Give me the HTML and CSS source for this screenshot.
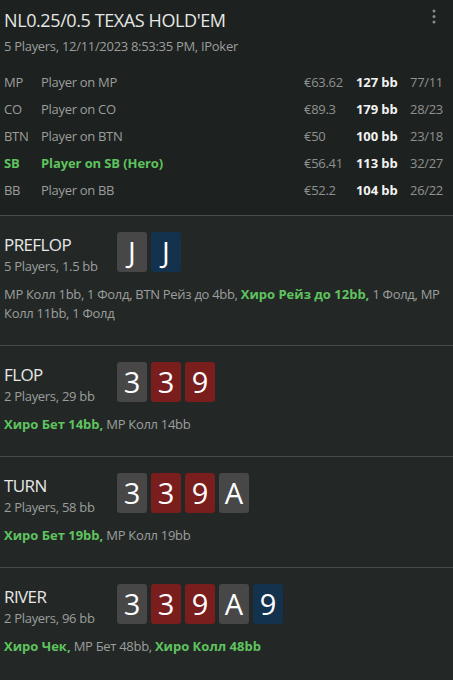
FILE: index.html
```html
<!DOCTYPE html>
<html lang="ru">
<head>
    <meta charset="UTF-8">
    <title>NL0.25/0.5 Texas Hold'em</title>
    <link rel="stylesheet" href="styles.css">
</head>
<body>

    <div class="hand-header">
        <div class="title-row">
            <h1 class="hand-title">NL0.25/0.5 TEXAS HOLD'EM</h1>
            <svg class="menu-dots" width="6" height="18" viewBox="0 0 6 18">
                <circle cx="3" cy="3" r="1.5" fill="#8a8c8b"/>
                <circle cx="3" cy="8.5" r="1.5" fill="#8a8c8b"/>
                <circle cx="3" cy="14" r="1.5" fill="#8a8c8b"/>
            </svg>
        </div>
        <div class="hand-info">5 Players, 12/11/2023 8:53:35 PM, IPoker</div>

        <div class="players">
            <div class="player">
                <span class="pos">MP</span>
                <span class="name">Player on MP</span>
                <span class="stack">€63.62</span>
                <span class="bb">127 bb</span>
                <span class="stats">77/11</span>
            </div>
            <div class="player">
                <span class="pos">CO</span>
                <span class="name">Player on CO</span>
                <span class="stack">€89.3</span>
                <span class="bb">179 bb</span>
                <span class="stats">28/23</span>
            </div>
            <div class="player">
                <span class="pos">BTN</span>
                <span class="name">Player on BTN</span>
                <span class="stack">€50</span>
                <span class="bb">100 bb</span>
                <span class="stats">23/18</span>
            </div>
            <div class="player hero">
                <span class="pos">SB</span>
                <span class="name">Player on SB (Hero)</span>
                <span class="stack">€56.41</span>
                <span class="bb">113 bb</span>
                <span class="stats">32/27</span>
            </div>
            <div class="player">
                <span class="pos">BB</span>
                <span class="name">Player on BB</span>
                <span class="stack">€52.2</span>
                <span class="bb">104 bb</span>
                <span class="stats">26/22</span>
            </div>
        </div>
    </div>

    <div class="street">
        <div class="street-head">
            <div class="street-info">
                <div class="street-name">PREFLOP</div>
                <div class="street-pot">5 Players, 1.5 bb</div>
            </div>
            <div class="cards">
                <span class="card grey">J</span>
                <span class="card blue">J</span>
            </div>
        </div>
        <div class="actions">MP Колл 1bb, 1 Фолд, BTN Рейз до 4bb, <b class="hero-act">Хиро Рейз до 12bb,</b> 1 Фолд, MP Колл 11bb, 1 Фолд</div>
    </div>

    <div class="street">
        <div class="street-head">
            <div class="street-info">
                <div class="street-name">FLOP</div>
                <div class="street-pot">2 Players, 29 bb</div>
            </div>
            <div class="cards">
                <span class="card grey">3</span>
                <span class="card red">3</span>
                <span class="card red">9</span>
            </div>
        </div>
        <div class="actions"><b class="hero-act">Хиро Бет 14bb,</b> MP Колл 14bb</div>
    </div>

    <div class="street">
        <div class="street-head">
            <div class="street-info">
                <div class="street-name">TURN</div>
                <div class="street-pot">2 Players, 58 bb</div>
            </div>
            <div class="cards">
                <span class="card grey">3</span>
                <span class="card red">3</span>
                <span class="card red">9</span>
                <span class="card grey">A</span>
            </div>
        </div>
        <div class="actions"><b class="hero-act">Хиро Бет 19bb,</b> MP Колл 19bb</div>
    </div>

    <div class="street">
        <div class="street-head">
            <div class="street-info">
                <div class="street-name">RIVER</div>
                <div class="street-pot">2 Players, 96 bb</div>
            </div>
            <div class="cards">
                <span class="card grey">3</span>
                <span class="card red">3</span>
                <span class="card red">9</span>
                <span class="card grey">A</span>
                <span class="card blue">9</span>
            </div>
        </div>
        <div class="actions"><b class="hero-act">Хиро Чек,</b> MP Бет 48bb, <b class="hero-act">Хиро Колл 48bb</b></div>
    </div>

</body>
</html>
```

FILE: styles.css
```css
body {
    margin: 0;
    font-family: "Open Sans", "Noto Sans", sans-serif;
    background-color: #232826;
    color: #9c9e9d;
    letter-spacing: -0.3px;
}

.hand-header {
    background-color: #1d211f;
    padding: 6px 4px 11px;
}

.title-row {
    display: flex;
    justify-content: space-between;
    align-items: flex-start;
}

.hand-title {
    margin: 0;
    font-size: 18px;
    font-weight: normal;
    line-height: 28px;
    letter-spacing: -0.4px;
    color: #e6e7e6;
}

.menu-dots {
    margin: 2px 12px 0 0;
}

.hand-info {
    margin-top: 2px;
    font-size: 13px;
    line-height: 20px;
}

.players {
    margin-top: 13px;
}

.player {
    display: grid;
    grid-template-columns: 37px 1fr 52px 54px 39px;
    font-size: 13px;
    line-height: 27px;
    white-space: nowrap;
}

.player .stack {
    color: #8f9190;
}

.player .bb {
    color: #f2f2f2;
    font-weight: bold;
    letter-spacing: -0.1px;
}

.player .stats {
    color: #8f9190;
}

.player.hero .pos,
.player.hero .name {
    color: #5fc35f;
    font-weight: bold;
    letter-spacing: -0.1px;
}

.street {
    border-top: 1px solid #474b49;
    padding: 16px 4px 22px;
}

.street-head {
    display: flex;
    align-items: flex-start;
}

.street-info {
    width: 113px;
    flex-shrink: 0;
}

.street-name {
    font-size: 17px;
    line-height: 25px;
    letter-spacing: -0.6px;
    color: #e6e7e6;
}

.street-pot {
    font-size: 13px;
    line-height: 18px;
}

.cards {
    display: flex;
    gap: 4px;
}

.card {
    width: 30px;
    height: 40px;
    border-radius: 3px;
    color: #ffffff;
    font-size: 29px;
    line-height: 40px;
    letter-spacing: 0;
    text-align: center;
}

.card.grey {
    background-color: #474747;
}

.card.red {
    background-color: #7a1d1d;
}

.card.blue {
    background-color: #12324e;
}

.actions {
    margin-top: 10px;
    font-size: 13px;
    line-height: 19px;
}

.hero-act {
    color: #5fc35f;
    letter-spacing: 0;
}
```
